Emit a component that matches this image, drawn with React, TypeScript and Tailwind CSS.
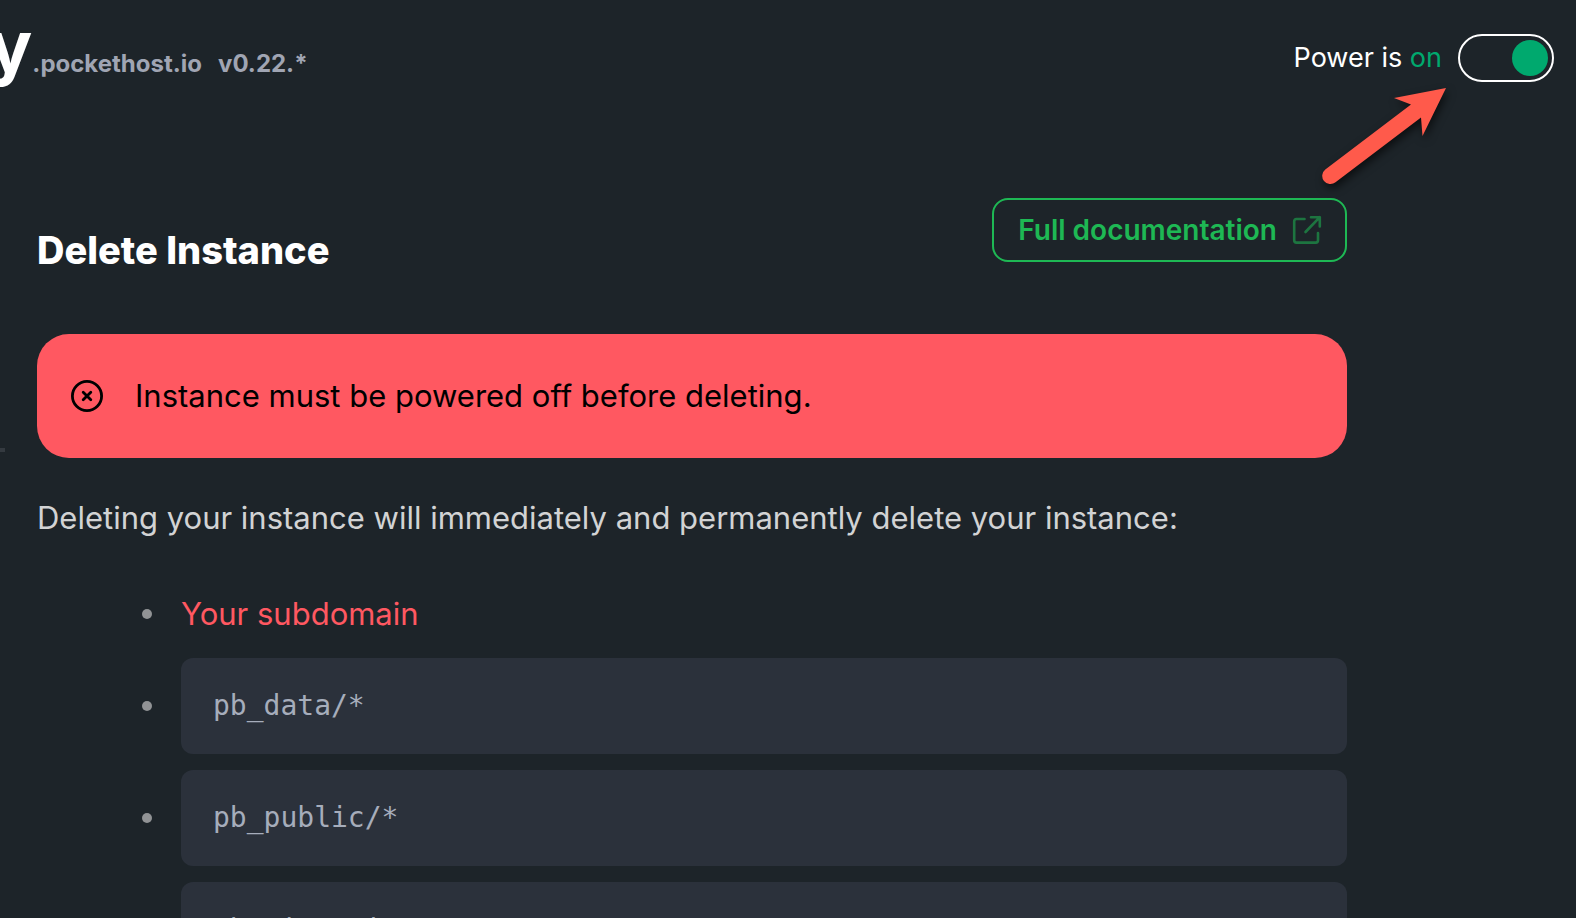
import { useState } from "react";

const paths = ["pb_data/*", "pb_public/*", "pb_migrations/*"];

function Bullet() {
  return <span aria-hidden="true" className="size-[10px] shrink-0 rounded-full bg-[#919395]" />;
}

function ExternalLinkIcon() {
  return (
    <svg aria-hidden="true" viewBox="0 0 28 28" className="size-7 overflow-visible opacity-55" fill="none" stroke="currentColor" strokeWidth="2.6" strokeLinecap="round" strokeLinejoin="round">
      <path d="M11.5 3H3.500Q1.200 3 1.200 5.300V24.300Q1.200 26.600 3.500 26.600H22.700Q25 26.600 25 24.300V17" />
      <path d="M18 1.200H26.800V10.500M26.800 1.200L12.500 16" />
    </svg>
  );
}

function CircleXIcon() {
  return (
    <svg aria-hidden="true" viewBox="0 0 32 32" className="size-8 shrink-0" fill="none" stroke="currentColor" strokeWidth="2.8" strokeLinecap="round" strokeLinejoin="round">
      <circle cx="16" cy="16" r="14.600" />
      <path d="M12.200 12.200L19.800 19.800M19.800 12.200L12.200 19.800" />
    </svg>
  );
}

function Arrow() {
  return (
    <svg aria-hidden="true" viewBox="0 0 140 120" className="pointer-events-none absolute top-20 right-[116px] h-[120px] w-[140px] drop-shadow-[2px_4px_4px_rgba(0,0,0,0.6)]">
      <path fill="#ff5a4b" d="M126 8L102.500 56L101 37.500L15.500 102.300A8 8 0 0 1 5.300 89.500L91 24.500L74 18Z" />
    </svg>
  );
}

export default function App() {
  const [on, setOn] = useState(true);
  return (
    <div className="relative h-screen overflow-hidden bg-[#1d2429] font-['Inter',sans-serif] text-white">
      <header className="flex h-[116px] items-center justify-between pr-[22px]">
        <h1 className="-ml-[11px] flex items-baseline pb-6 font-bold text-[#a0a5b3]">
          <span className="text-7xl leading-[72px] text-white">y</span>
          <span className="text-2xl">.pockethost.io</span>
          <span className="ml-4 text-2xl">v0.22.*</span>
        </h1>
        <label className="flex items-center gap-4 text-[27px]">
          <span>
            Power is <span className="text-[#00a96e]">{on ? "on" : "off"}</span>
          </span>
          <input
            type="checkbox"
            role="switch"
            checked={on}
            onChange={(e) => setOn(e.target.checked)}
            className="h-12 w-24 appearance-none rounded-full border-2 border-white p-1 before:block before:size-9 before:rounded-full before:bg-[#8b9098] checked:before:ml-auto checked:before:bg-[#00a96e]"
          />
        </label>
      </header>
      <Arrow />
      <div className="flex gap-8">
        <aside className="w-[5px] shrink-0 pt-[332px]">
          <hr className="h-1 border-0 bg-[#343a40]" />
        </aside>
        <main className="mr-[229px] flex grow flex-col pt-[82px] text-[31px] leading-[56px]">
          <div className="flex items-start justify-between">
            <h2 className="pt-6 text-[38px] leading-[56px] font-extrabold">Delete Instance</h2>
            <a href="#docs" className="flex h-16 items-center gap-4 rounded-2xl border-2 border-[#1eb854] px-6 text-[28px] font-semibold text-[#1eb854]">
              Full documentation
              <ExternalLinkIcon />
            </a>
          </div>
          <div role="alert" className="mt-14 flex h-[124px] items-center gap-8 rounded-[32px] bg-[#ff5861] px-[34px] text-black">
            <CircleXIcon />
            <span>Instance must be powered off before deleting.</span>
          </div>
          <p className="mt-8 text-[#d2d3d4]">Deleting your instance will immediately and permanently delete your instance:</p>
          <ul className="mt-10 flex flex-col gap-4 pl-[105px]">
            <li className="flex items-center gap-[29px]">
              <Bullet />
              <span className="text-[#ff5861]">Your subdomain</span>
            </li>
            {paths.map((path) => (
              <li key={path} className="flex items-center gap-[29px]">
                <Bullet />
                <code className="flex h-24 grow items-center rounded-xl bg-[#2b313b] px-8 font-['DejaVu_Sans_Mono',monospace] text-[28px] text-[#a6adbb]">{path}</code>
              </li>
            ))}
          </ul>
        </main>
      </div>
    </div>
  );
}
